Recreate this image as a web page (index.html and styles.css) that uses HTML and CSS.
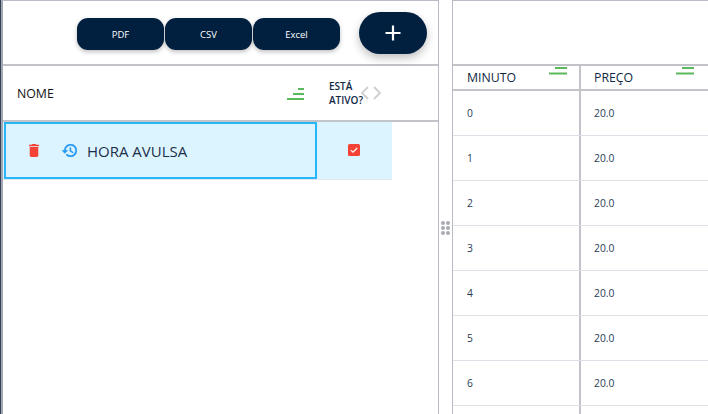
FILE: index.html
```html
<!DOCTYPE html>
<html lang="pt">

<head>
    <meta charset="UTF-8">
    <meta name="viewport" content="width=device-width, initial-scale=1.0">
    <title>Tabelas de preço</title>
    <link rel="stylesheet" href="styles.css">
</head>

<body>

    <!-- lista de tabelas -->
    <section class="panel panel-left">
        <div class="toolbar">
            <div class="export-group">
                <button class="export-btn">PDF</button>
                <button class="export-btn">CSV</button>
                <button class="export-btn">Excel</button>
            </div>
            <button class="add-btn">
                <svg width="16" height="16" viewBox="0 0 16 16"><path d="M8 0.5v15M0.5 8h15" stroke="#fff" stroke-width="2.2" fill="none"/></svg>
            </button>
        </div>

        <div class="list-head">
            <div class="head-name">
                <span>NOME</span>
                <svg class="sort-icon" width="18" height="13" viewBox="0 0 18 13"><path d="M11 2h6M6 7h11M0 12h17" stroke="#5cb85c" stroke-width="2" fill="none"/></svg>
            </div>
            <div class="head-active">ESTÁ ATIVO?</div>
            <svg class="head-arrows" width="20" height="14" viewBox="0 0 20 14"><path d="M7 1L1 7l6 6M13 1l6 6-6 6" stroke="#cfcfcf" stroke-width="1.8" fill="none"/></svg>
        </div>

        <div class="list-row">
            <div class="cell-name">
                <svg width="10" height="13" viewBox="5 3 14 18"><path d="M6 19c0 1.100.9 2 2 2h8c1.100 0 2-.9 2-2V7H6v12zM19 4h-3.500l-1-1h-5l-1 1H5v2h14V4z" fill="#f44336"/></svg>
                <svg class="history-icon" width="15" height="13" viewBox="1 3 21 18"><path d="M13 3a9 9 0 0 0-9 9H1l3.890 3.890.07.14L9 12H6c0-3.870 3.130-7 7-7s7 3.130 7 7-3.130 7-7 7c-1.930 0-3.680-.79-4.940-2.060l-1.420 1.420A8.954 8.954 0 0 0 13 21a9 9 0 0 0 0-18zm-1 5v5l4.280 2.540.72-1.210-3.500-2.080V8H12z" fill="#2196f3" stroke="#2196f3" stroke-width=".7"/></svg>
                <span>HORA AVULSA</span>
            </div>
            <div class="cell-active">
                <svg width="12" height="12" viewBox="0 0 12 12"><rect width="12" height="12" rx="1.500" fill="#f44336"/><path d="M2.800 6.200l2.200 2 4.200-4.200" stroke="#fff" stroke-width="1.100" fill="none"/></svg>
            </div>
        </div>
    </section>

    <!-- divisor -->
    <div class="splitter">
        <div class="grip">
            <i></i><i></i><i></i><i></i><i></i><i></i>
        </div>
    </div>

    <!-- detalhes -->
    <section class="panel panel-right">
        <div class="detail-top"></div>
        <div class="detail-head">
            <div class="col-min">MINUTO
                <svg class="sort-small" width="18" height="8" viewBox="0 0 18 8"><path d="M6 1h12M0 6.500h18" stroke="#5cb85c" stroke-width="2" fill="none"/></svg>
            </div>
            <div class="col-price">PREÇO
                <svg class="sort-small" width="18" height="8" viewBox="0 0 18 8"><path d="M6 1h12M0 6.500h18" stroke="#5cb85c" stroke-width="2" fill="none"/></svg>
            </div>
        </div>
        <div class="detail-row"><div class="col-min">0</div><div class="col-price">20.0</div></div>
        <div class="detail-row"><div class="col-min">1</div><div class="col-price">20.0</div></div>
        <div class="detail-row"><div class="col-min">2</div><div class="col-price">20.0</div></div>
        <div class="detail-row"><div class="col-min">3</div><div class="col-price">20.0</div></div>
        <div class="detail-row"><div class="col-min">4</div><div class="col-price">20.0</div></div>
        <div class="detail-row"><div class="col-min">5</div><div class="col-price">20.0</div></div>
        <div class="detail-row"><div class="col-min">6</div><div class="col-price">20.0</div></div>
        <div class="detail-row"><div class="col-min"></div><div class="col-price"></div></div>
    </section>

</body>

</html>
```

FILE: styles.css
```css
html,
body {
    height: 100%;
}

body {
    font-family: 'Open Sans', 'Noto Sans', sans-serif;
    background-color: #fff;
    color: #0f2744;
    margin: 0;
    padding: 0;
    border-left: 1px solid #33435a;
    display: flex;
    overflow: hidden;
    box-sizing: border-box;
}

.panel {
    box-sizing: border-box;
    height: 100%;
    border-top: 1px solid #b9bcc6;
    overflow: hidden;
}

.panel-left {
    width: 438px;
    flex: none;
    border-left: 2px solid #a4a7b1;
    border-right: 1px solid #b9bcc6;
}

.panel-right {
    flex: 1;
    border-left: 1px solid #b9bcc6;
}

.splitter {
    width: 13px;
    flex: none;
    display: flex;
    align-items: center;
    justify-content: center;
    padding-top: 42px;
    box-sizing: border-box;
}

.grip {
    display: grid;
    grid-template-columns: 4px 4px;
    grid-auto-rows: 4px;
    gap: 1px;
}

.grip i {
    background-color: #a9abb3;
    border-radius: 50%;
}

/* barra superior */
.toolbar {
    height: 65px;
    box-sizing: border-box;
    border-bottom: 2px solid #c3c4ca;
    display: flex;
    align-items: flex-start;
    padding: 11px 0 0 74px;
}

.export-group {
    display: flex;
    gap: 1px;
    margin-top: 6px;
}

.export-btn {
    width: 87px;
    height: 32px;
    border: none;
    border-radius: 11px;
    background-color: #012040;
    color: #fff;
    font-family: inherit;
    font-size: 9.500px;
    padding: 0;
    box-shadow: 0 2px 4px rgba(0, 0, 0, 0.25);
}

.add-btn {
    width: 68px;
    height: 42px;
    margin-left: 19px;
    border: none;
    border-radius: 21px;
    background-color: #012040;
    padding: 0;
    display: flex;
    align-items: center;
    justify-content: center;
    box-shadow: 0 4px 8px rgba(0, 0, 0, 0.25);
}

/* lista */
.list-head {
    height: 56px;
    box-sizing: border-box;
    border-bottom: 2px solid #c3c4ca;
    display: flex;
    align-items: center;
    position: relative;
}

.head-name {
    width: 315px;
    box-sizing: border-box;
    padding: 0 13px 0 14px;
    display: flex;
    align-items: center;
    justify-content: space-between;
    font-size: 12.300px;
    font-weight: 500;
    color: #111;
}

.head-active {
    width: 44px;
    margin-left: 11px;
    font-size: 10px;
    font-weight: 600;
    line-height: 14px;
}

.head-arrows {
    position: absolute;
    left: 358px;
    top: 20px;
}

.list-row {
    width: 389px;
    height: 58px;
    display: flex;
    background-color: #dcf4ff;
    border-bottom: 1px solid #e3e7ef;
    box-sizing: border-box;
}

.cell-name {
    width: 313px;
    box-sizing: border-box;
    border: 2px solid #29b6f6;
    margin-left: 1px;
    display: flex;
    align-items: center;
    padding-left: 23px;
    font-size: 15px;
    color: #1c2f4a;
}

.history-icon {
    margin-left: 23px;
}

.cell-name span {
    margin-left: 10px;
}

.cell-active {
    flex: 1;
    display: flex;
    align-items: center;
    justify-content: center;
    padding: 0 2px 2px 0;
}

/* tabela da direita */
.detail-top {
    height: 65px;
    border-bottom: 2px solid #c3c4ca;
    box-sizing: border-box;
}

.detail-head {
    height: 25px;
    box-sizing: border-box;
    border-bottom: 2px solid #c3c4ca;
    display: flex;
    font-size: 12.300px;
    font-weight: 500;
}

.detail-row {
    height: 45px;
    box-sizing: border-box;
    border-bottom: 1px solid #dfe1e8;
    display: flex;
    font-size: 10.300px;
    color: #2a3c55;
}

.col-min,
.col-price {
    box-sizing: border-box;
    display: flex;
    align-items: center;
    position: relative;
}

.col-min {
    width: 128px;
    padding-left: 14px;
    border-right: 2px solid #c3c4ca;
}

.col-price {
    flex: 1;
    padding-left: 13px;
}

.sort-small {
    position: absolute;
    top: 1px;
    right: 12px;
}

.col-price .sort-small {
    right: 14px;
}
```
